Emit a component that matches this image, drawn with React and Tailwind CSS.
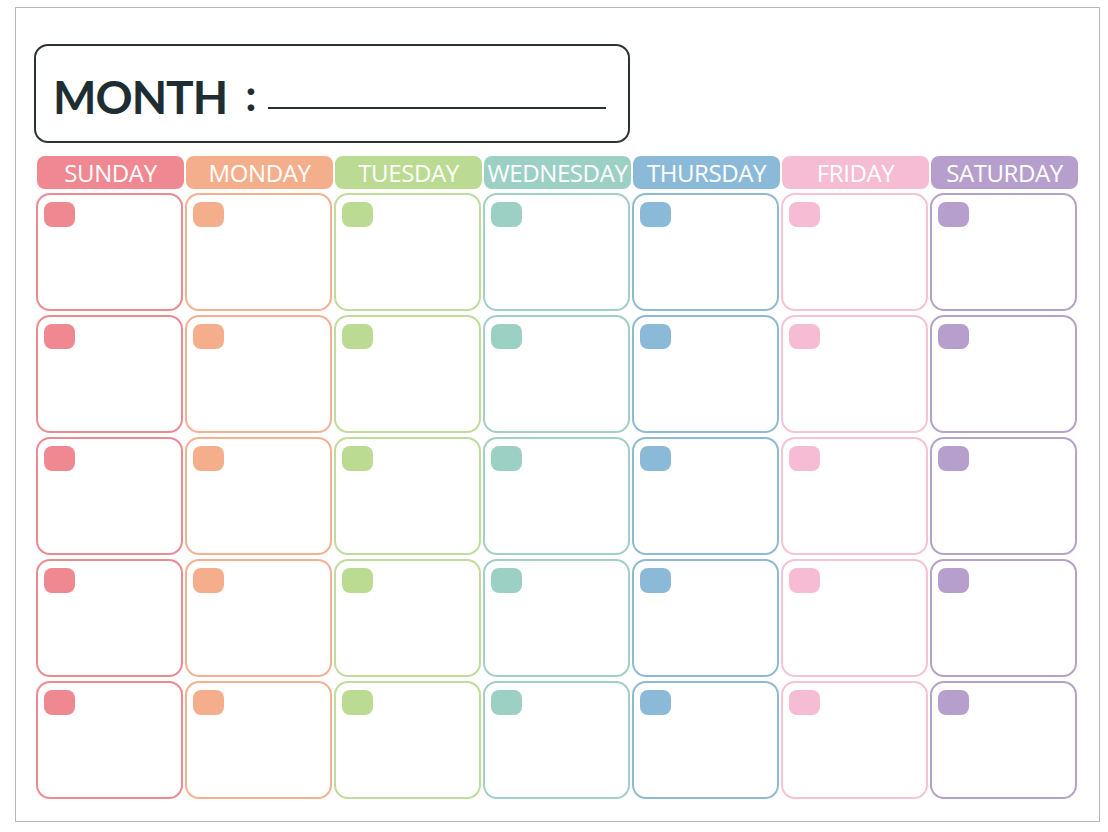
import React from "react";

const days = [
  { name: "SUNDAY", head: "bg-[#ef8891]", border: "border-[#ec8a92]", tag: "bg-[#ef8891]" },
  { name: "MONDAY", head: "bg-[#f5ae8c]", border: "border-[#f4b192]", tag: "bg-[#f5ae8c]" },
  { name: "TUESDAY", head: "bg-[#bbdb92]", border: "border-[#bfdc9a]", tag: "bg-[#bbdb92]" },
  { name: "WEDNESDAY", head: "bg-[#9dd0c5]", border: "border-[#a2cfc6]", tag: "bg-[#9dd0c5]" },
  { name: "THURSDAY", head: "bg-[#8bbad9]", border: "border-[#8fbad6]", tag: "bg-[#8bbad9]" },
  { name: "FRIDAY", head: "bg-[#f5bcd3]", border: "border-[#f5c2d6]", tag: "bg-[#f5bcd3]" },
  { name: "SATURDAY", head: "bg-[#b69fcc]", border: "border-[#b5a2c9]", tag: "bg-[#b69fcc]" },
];

const weeks = [0, 1, 2, 3, 4];

export default function App() {
  return (
    <div className="bg-white w-[1108px] h-[832px] pt-[7px] pl-[15px]">
      <div className="w-[1085px] h-[815px] border border-[#b8b8b8] pt-[36px] pl-[18px]">
        {/* month title */}
        <div className="w-[596px] h-[99px] border-2 border-[#2e3234] rounded-[14px] flex items-center pl-[17px] pt-[6px]">
          <span className="font-['Lato',sans-serif] font-bold text-[46px] text-[#1e2d32] tracking-[-1px] leading-none">
            MONTH
          </span>
          <span className="font-['Lato',sans-serif] font-bold text-[44px] text-[#1e2d32] leading-none ml-[18px] -mt-[6px]">
            :
          </span>
          <div className="w-[338px] h-[2px] bg-[#2a2f31] ml-[12px] mt-[22px]" />
        </div>

        {/* weekday headers */}
        <div className="grid grid-cols-[repeat(7,147px)] gap-x-[2px] mt-[13px] ml-[3px]">
          {days.map((d) => (
            <div
              key={d.name}
              className={`${d.head} h-[33px] rounded-[8px] flex items-center justify-center text-white font-['Open_Sans',sans-serif] text-[24px] tracking-[-0.4px] leading-none`}
            >
              {d.name}
            </div>
          ))}
        </div>

        {/* day cells */}
        <div className="grid grid-cols-[repeat(7,147px)] gap-x-[2px] gap-y-[4px] mt-[4px] ml-[2px]">
          {weeks.map((w) =>
            days.map((d) => (
              <div
                key={`${w}-${d.name}`}
                className={`h-[118px] border-2 ${d.border} rounded-[14px] pt-[7px] pl-[6px]`}
              >
                <div className={`${d.tag} w-[31px] h-[25px] rounded-[8px]`} />
              </div>
            ))
          )}
        </div>
      </div>
    </div>
  );
}
